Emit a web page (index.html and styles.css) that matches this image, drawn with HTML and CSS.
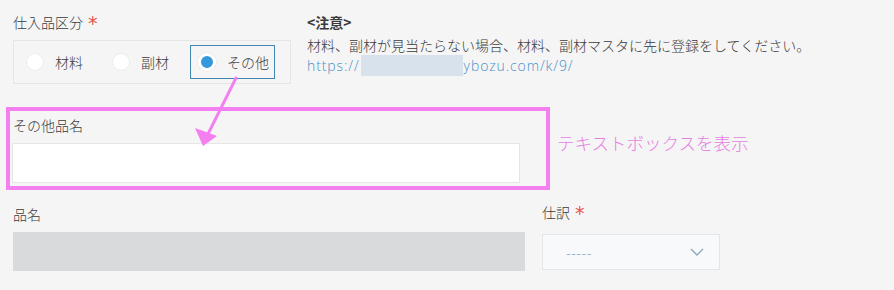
FILE: index.html
```html
<!DOCTYPE html>
<html lang="ja">
<head>
<meta charset="utf-8">
<title>form</title>
<link rel="stylesheet" href="styles.css">
</head>
<body>
<div class="page">
  <div class="row row-top">
    <div class="field field-kind">
      <div class="label">仕入品区分<span class="req">*</span></div>
      <div class="radios">
        <div class="opt"><span class="radio"></span><span class="opt-text">材料</span></div>
        <div class="opt"><span class="radio"></span><span class="opt-text">副材</span></div>
        <div class="opt opt-on"><span class="radio radio-on"></span><span class="opt-text">その他</span></div>
      </div>
    </div>
    <div class="note">
      <div class="note-title">&lt;注意&gt;</div>
      <div class="note-line">材料、副材が見当たらない場合、材料、副材マスタに先に登録をしてください。</div>
      <div class="note-line link">https://<span class="blur"></span>ybozu.com/k/9/</div>
    </div>
  </div>

  <div class="row row-mid">
    <div class="hl">
      <div class="label">その他品名</div>
      <div class="textbox"></div>
    </div>
    <div class="hl-text">テキストボックスを表示</div>
  </div>

  <div class="row row-bottom">
    <div class="field field-name">
      <div class="label">品名</div>
      <div class="disabled-box"></div>
    </div>
    <div class="field field-acc">
      <div class="label">仕訳<span class="req">*</span></div>
      <div class="select">
        <span class="select-val">-----</span>
        <svg class="chev" width="14" height="8" viewBox="0 0 14 8"><path d="M1 1 L7 7 L13 1" fill="none" stroke="#8ea6bf" stroke-width="1.4"/></svg>
      </div>
    </div>
  </div>

  <svg class="arrow" width="894" height="290" viewBox="0 0 894 290">
    <line x1="236" y1="78" x2="208" y2="134" stroke="#f47ff0" stroke-width="3" stroke-linecap="round"/>
    <polygon points="203,146 195,128 217,136" fill="#f47ff0"/>
  </svg>
</div>
</body>
</html>
```

FILE: styles.css
```css
html, body {
  margin: 0;
  padding: 0;
  background: #f5f5f5;
}
.page {
  position: relative;
  width: 894px;
  height: 290px;
  overflow: hidden;
  font-family: "Noto Sans CJK JP", "Noto Sans", sans-serif;
  font-size: 14px;
  font-weight: 300;
  color: #3a3a3a;
}
.row {
  display: flex;
  align-items: flex-start;
}
.label {
  line-height: 20px;
  height: 20px;
  white-space: nowrap;
}
.req {
  display: inline-block;
  vertical-align: top;
  color: #e5534b;
  margin-left: 5px;
  font-family: "DejaVu Sans", sans-serif;
  font-weight: normal;
  font-size: 19px;
  line-height: 22px;
  height: 20px;
}

/* top row */
.row-top {
  padding-left: 13px;
}
.field-kind {
  padding-top: 12px;
  width: 294px;
}
.field-kind .label {
  margin-bottom: 11px;
}
.radios {
  box-sizing: border-box;
  width: 278px;
  height: 44px;
  border: 1px solid #e6e6e6;
  padding: 4px;
  display: flex;
}
.opt {
  display: flex;
  align-items: center;
  box-sizing: border-box;
  height: 34px;
  border: 1px solid transparent;
  padding: 0 5px 0 7px;
}
.opt + .opt {
  margin-left: 15px;
}
.opt-on {
  border-color: #3f88b0;
}
.radio {
  box-sizing: border-box;
  width: 18px;
  height: 18px;
  border-radius: 50%;
  background: #fff;
  border: 1px solid #ececec;
  margin-right: 11px;
}
.radio-on {
  background: #3498db;
  border: 3px solid #fff;
  box-shadow: 0 0 0 1px #ececec;
}
.note {
  padding-top: 12px;
  line-height: 20px;
}
.note-title {
  font-weight: bold;
  margin-bottom: 3px;
}
.link {
  color: #4a8fc9;
  display: flex;
  align-items: center;
  font-family: "Open Sans", "Noto Sans", sans-serif;
  letter-spacing: 0.9px;
}
.blur {
  display: inline-block;
  width: 102px;
  height: 21px;
  margin: 0 1px 0 1px;
  background: #d8e2ec;
}

/* middle row */
.row-mid {
  margin-top: 23px;
  margin-left: 6px;
}
.hl {
  box-sizing: border-box;
  width: 544px;
  height: 83px;
  border: 4px solid #f47ff0;
  padding: 4px 0 0 2px;
}
.hl .label {
  padding-left: 1px;
  margin-bottom: 8px;
}
.textbox {
  box-sizing: border-box;
  width: 508px;
  height: 40px;
  background: #fff;
  border: 1px solid #e6e6e6;
}
.hl-text {
  margin-left: 7px;
  margin-top: 24px;
  font-size: 17.5px;
  line-height: 24px;
  color: #e57fe3;
  white-space: nowrap;
}

/* bottom row */
.row-bottom {
  margin-top: 14px;
  padding-left: 13px;
}
.field-name {
  width: 529px;
}
.field .label {
  margin-bottom: 8px;
}
.disabled-box {
  width: 512px;
  height: 39px;
  background: #d9dadb;
}
.field-acc .label {
  margin-top: -2px;
  margin-bottom: 12px;
}
.select {
  box-sizing: border-box;
  width: 178px;
  height: 36px;
  background: #f7f9fa;
  border: 1px solid #e2e6e9;
  display: flex;
  align-items: center;
  justify-content: space-between;
  padding: 0 15px 0 23px;
}
.select-val {
  color: #7f9fc2;
  letter-spacing: 0.5px;
}
.chev {
  display: block;
}

.arrow {
  position: absolute;
  left: 0;
  top: 0;
  pointer-events: none;
}
```
